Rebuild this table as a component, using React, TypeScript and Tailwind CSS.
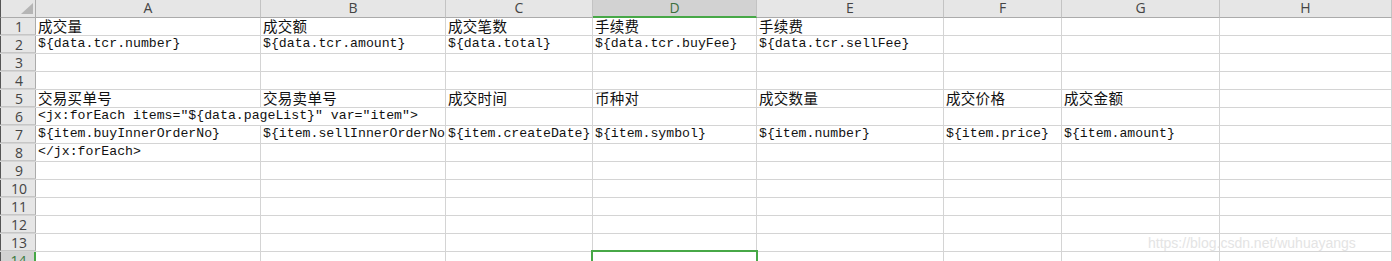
import React from "react";

// Column widths measured from the sheet (each includes its right gridline)
const columns = [
  { key: "A", w: "w-[225px]" },
  { key: "B", w: "w-[185px]" },
  { key: "C", w: "w-[147px]" },
  { key: "D", w: "w-[164px]" },
  { key: "E", w: "w-[187px]" },
  { key: "F", w: "w-[118px]" },
  { key: "G", w: "w-[158px]" },
  { key: "H", w: "flex-1" },
];

type Cell = { text: string; cjk?: boolean; span?: number };

const rows: Record<number, (Cell | null)[]> = {
  1: [
    { text: "成交量", cjk: true },
    { text: "成交额", cjk: true },
    { text: "成交笔数", cjk: true },
    { text: "手续费", cjk: true },
    { text: "手续费", cjk: true },
  ],
  2: [
    { text: "${data.tcr.number}" },
    { text: "${data.tcr.amount}" },
    { text: "${data.total}" },
    { text: "${data.tcr.buyFee}" },
    { text: "${data.tcr.sellFee}" },
  ],
  5: [
    { text: "交易买单号", cjk: true },
    { text: "交易卖单号", cjk: true },
    { text: "成交时间", cjk: true },
    { text: "币种对", cjk: true },
    { text: "成交数量", cjk: true },
    { text: "成交价格", cjk: true },
    { text: "成交金额", cjk: true },
  ],
  6: [{ text: '<jx:forEach items="${data.pageList}" var="item">', span: 2 }],
  7: [
    { text: "${item.buyInnerOrderNo}" },
    { text: "${item.sellInnerOrderNo}" },
    { text: "${item.createDate}" },
    { text: "${item.symbol}" },
    { text: "${item.number}" },
    { text: "${item.price}" },
    { text: "${item.amount}" },
  ],
  8: [{ text: "</jx:forEach>" }],
};

const mono = "font-['Liberation_Mono','Noto_Sans_CJK_SC',monospace] text-[13.2px] leading-[16px]";
const cjk = "font-['Noto_Sans_CJK_SC',sans-serif] text-[14.5px] leading-[16px] tracking-[0.3px]";
const headFont = "font-['Open_Sans','Liberation_Sans',sans-serif]";

function SheetRow({ n }: { n: number }) {
  const data = rows[n] || [];
  const selectedRow = n === 14;
  const cells: React.ReactNode[] = [];
  let i = 0;
  while (i < columns.length) {
    const col = columns[i];
    const cell = data[i];
    if (cell && cell.span === 2) {
      // text runs on into the empty cell B, so no gridline between them
      cells.push(
        <div
          key={col.key}
          className="w-[410px] h-full border-r border-[#d4d4d4] flex items-end pl-[2px] pb-[1px] whitespace-nowrap overflow-hidden"
        >
          <span className={`${mono} text-[#111]`}>{cell.text}</span>
        </div>
      );
      i += 2;
      continue;
    }
    const active = selectedRow && col.key === "D";
    cells.push(
      <div
        key={col.key}
        className={`${col.w} h-full border-r border-[#d4d4d4] flex items-end pl-[2px] pb-[1px] whitespace-nowrap relative ${
          active ? "overflow-visible" : "overflow-hidden"
        }`}
      >
        {cell && <span className={`${cell.cjk ? cjk : mono} text-[#111]`}>{cell.text}</span>}
        {active && (
          <div className="absolute -left-[2px] -top-[2px] w-[167px] h-[22px] border-2 border-[#47a847]" />
        )}
      </div>
    );
    i++;
  }

  return (
    <div className="flex h-[18px] border-b border-[#d4d4d4]">
      <div
        className={`w-[36px] shrink-0 h-full border-l border-l-[#555] border-b border-b-[#c6c6c6] flex items-start justify-center text-[14px] leading-[17px] ${headFont} ${
          selectedRow
            ? "bg-[#d2d2d2] border-r-2 border-r-[#47a847] text-[#3b7a3b]"
            : "bg-[#e6e6e6] border-r border-r-[#ababab] text-[#444]"
        }`}
      >
        <span className="pl-[2px]">{n}</span>
      </div>
      {cells}
    </div>
  );
}

export default function App() {
  const rowNumbers = Array.from({ length: 14 }, (_, k) => k + 1);

  return (
    <div className="relative w-[1392px] h-[261px] overflow-hidden bg-white">
      {/* Column header */}
      <div className="flex h-[18px]">
        <div className="w-[36px] shrink-0 h-full bg-[#e6e6e6] border-l border-l-[#555] border-r border-r-[#ababab] border-b border-b-[#ababab] relative">
          <svg className="absolute left-[20px] top-[3px]" width="12" height="11" viewBox="0 0 12 11">
            <polygon points="12,0 12,11 0,11" fill="#b5b5b5" />
          </svg>
        </div>
        {columns.map((col) => {
          const active = col.key === "D";
          return (
            <div
              key={col.key}
              className={`${col.w} h-full border-r border-r-[#c3c3c3] flex items-start justify-center text-[14px] leading-[16px] ${headFont} ${
                active
                  ? "bg-[#d2d2d2] border-b-2 border-b-[#47a847] text-[#3d6f3d]"
                  : "bg-[#e6e6e6] border-b border-b-[#ababab] text-[#444]"
              }`}
            >
              {col.key}
            </div>
          );
        })}
      </div>

      {rowNumbers.map((n) => (
        <SheetRow key={n} n={n} />
      ))}

      {/* blog watermark */}
      <div className="absolute left-[1148px] top-[233px] font-['Liberation_Sans',sans-serif] text-[14px] text-[#e4e4e4]">
        https://blog.csdn.net/wuhuayangs
      </div>
    </div>
  );
}
